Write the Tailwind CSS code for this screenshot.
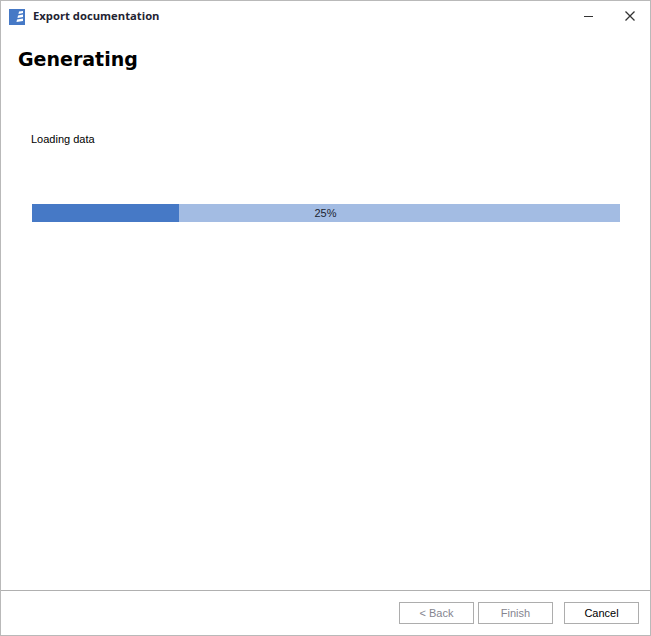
<!DOCTYPE html>
<html lang="en">
<head>
    <meta charset="UTF-8">
    <title>Export documentation</title>
    <script src="https://cdn.jsdelivr.net/npm/@tailwindcss/browser@4"></script>
</head>
<body class="bg-white">
    <div class="w-[651px] h-[636px] flex flex-col border border-[#b9b9b9] bg-white font-['Liberation_Sans',sans-serif] text-[11px] text-black overflow-hidden">
        <!-- title bar -->
        <div class="h-[30px] flex items-center shrink-0">
            <svg class="ml-[8px] mt-[1px]" width="16" height="16" viewBox="0 0 16 16">
                <rect width="16" height="16" fill="#4679c6"/>
                <path d="M10 2.500L14 2V4L9.500 5ZM9 6.500L14 5.500V8L8.500 9ZM8 10.500L14 9.500V12L7.500 13Z" fill="#ffffff"/>
            </svg>
            <span class="ml-[8px] font-['Open_Sans',sans-serif] font-bold text-[11.25px] text-[#1f2433]">Export documentation</span>
            <svg class="ml-auto" width="12" height="12" viewBox="0 0 12 12"><path d="M1 6.500H10" stroke="#333" stroke-width="1"/></svg>
            <svg class="ml-[29px] mr-[14px]" width="12" height="12" viewBox="0 0 12 12"><path d="M1.500 1.500L10.500 10.500M10.500 1.500L1.500 10.500" stroke="#333" stroke-width="1.300"/></svg>
        </div>
        <!-- content -->
        <div class="flex-1 flex flex-col">
            <h1 class="ml-[17px] mt-[14px] h-[28px] leading-[28px] font-['DejaVu_Sans',sans-serif] font-bold text-[19px] text-black">Generating</h1>
            <p class="ml-[30px] mt-[58px] h-[16px] leading-[16px]">Loading data</p>
            <div class="relative ml-[31px] mt-[57px] w-[588px] h-[18px] bg-[#a3bce3]">
                <div class="h-full w-[147px] bg-[#4679c6]"></div>
                <span class="absolute inset-0 flex items-center justify-center pr-[1px] text-[#1c2430]">25%</span>
            </div>
        </div>
        <!-- footer -->
        <div class="h-[45px] shrink-0 border-t border-[#b0b0b0] flex items-start justify-end pt-[11px] pr-[11px]">
            <button class="w-[75px] h-[22px] border border-[#adadad] text-[#85858f]">&lt; Back</button>
            <button class="ml-[4px] w-[75px] h-[22px] border border-[#adadad] text-[#85858f]">Finish</button>
            <button class="ml-[11px] w-[75px] h-[22px] border border-[#adadad] text-black">Cancel</button>
        </div>
    </div>
</body>
</html>
